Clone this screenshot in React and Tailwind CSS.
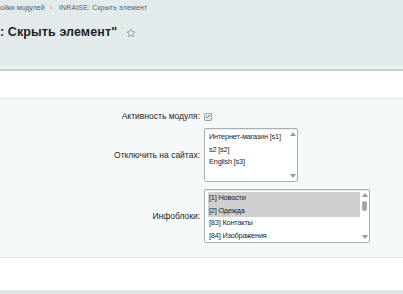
import { Check } from "lucide-react";

function ListBox({ items, selected = [], width, thumb }) {
  return (
    <div
      className={`${width} h-[54px] bg-white border border-[#a9b0b3] rounded-[2px] flex text-[7.4px] tracking-[-0.2px] shadow-[inset_0_1px_1px_rgba(0,0,0,0.08)]`}
    >
      <div className="flex-1 pl-[3px] pt-[2px] overflow-hidden">
        {items.map((it, i) => (
          <div
            key={it}
            className={`h-[12.5px] leading-[12.5px] pl-[1px] whitespace-nowrap ${
              selected.includes(i) ? "bg-[#cfcfcf]" : ""
            }`}
          >
            {it}
          </div>
        ))}
      </div>
      <div className="w-[9px] flex flex-col items-center justify-between py-[3px]">
        <span className="w-0 h-0 border-l-[3px] border-r-[3px] border-b-[4px] border-l-transparent border-r-transparent border-b-[#9a9a9a]" />
        {thumb && <span className="w-[5px] h-[10px] rounded-[3px] bg-[#a7a7a7] -mt-[20px]" />}
        <span className="w-0 h-0 border-l-[3px] border-r-[3px] border-t-[4px] border-l-transparent border-r-transparent border-t-[#9a9a9a]" />
      </div>
    </div>
  );
}

export default function App() {
  return (
    <div className="w-[403px] h-[294px] overflow-hidden bg-white font-['Liberation_Sans',Arial,sans-serif] text-[#222]">
      <header className="h-[71px] bg-[#e3eaec] border-b-2 border-[#c5cbce] shadow-[inset_0_-3px_0_#eef3f5]">
        <div className="h-[16px] flex items-center text-[7px] text-[#506272] pt-[1px]">
          <span>ойки модулей</span>
          <span className="ml-[5px] mr-[7px] text-[#8a97a2] text-[7px]">›</span>
          <span className="tracking-[0.15px]">INRAISE: Скрыть элемент</span>
        </div>
        <div className="flex items-center h-[24px] mt-[4px]">
          <h1 className="text-[12.5px] font-bold text-[#1f1f1f] tracking-[0.1px]">
            : Скрыть элемент"
          </h1>
          <svg className="ml-[9px] mt-[1px]" width="10" height="10" viewBox="0 0 24 24" fill="none" stroke="#8d969c" strokeWidth="2" strokeLinejoin="round">
            <path d="M12 2.5l2.9 6.2 6.8.8-5 4.7 1.3 6.7L12 17.6l-6 3.3 1.3-6.7-5-4.7 6.8-.8z" />
          </svg>
        </div>
      </header>

      <div className="h-[27px]" />

      <section className="bg-[#f5f9f9] border-t border-b border-[#dfe5e7] pt-[13px] pb-[14px] text-[8.5px] text-[#1e1e1e]">
        <div className="flex items-center gap-[4px] h-[9px]">
          <div className="w-[200px] text-right">Активность модуля:</div>
          <div className="w-[8px] h-[8px] rounded-[1px] border border-[#9ea5a8] bg-[#e2e6e8] flex items-center justify-center">
            <Check size={7} strokeWidth={3} color="#555" />
          </div>
        </div>

        <div className="flex items-center gap-[4px] mt-[7px]">
          <div className="w-[200px] text-right">Отключить на сайтах:</div>
          <ListBox width="w-[94px]" items={["Интернет-магазин [s1]", "s2 [s2]", "English [s3]"]} />
        </div>

        <div className="flex items-center gap-[4px] mt-[7px]">
          <div className="w-[200px] text-right">Инфоблоки:</div>
          <ListBox
            width="w-[166px]"
            thumb
            selected={[0, 1]}
            items={["[1] Новости", "[2] Одежда", "[83] Контакты", "[84] Изображения"]}
          />
        </div>
      </section>

      <div className="h-[32px]" />
      <div className="h-[4px] bg-[#dfe5e7]" />
    </div>
  );
}
